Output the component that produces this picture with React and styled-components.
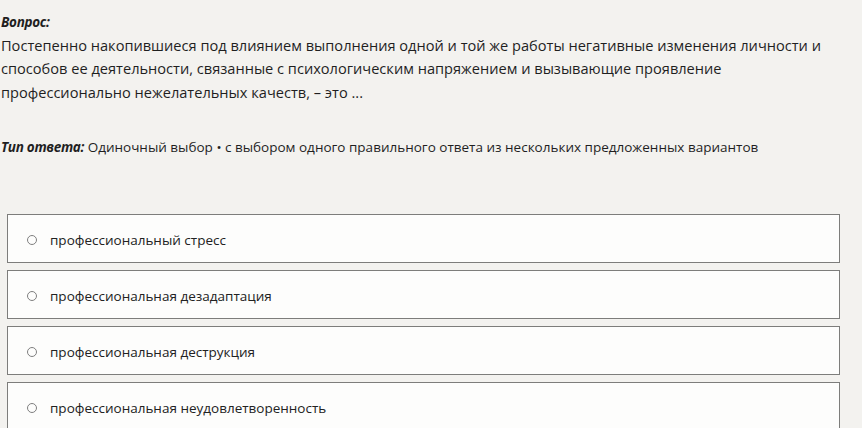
import React from 'react'
import styled, { createGlobalStyle } from 'styled-components'

const Global = createGlobalStyle`
  html, body {
    margin: 0;
    padding: 0;
    background: #f3f2ef;
  }
  body {
    font-family: "Open Sans", "Noto Sans", sans-serif;
    color: #1f1f1f;
  }
`

const Page = styled.div`
  padding: 11px 0 0 1px;
`

const Label = styled.span`
  font-weight: 700;
  font-style: italic;
  letter-spacing: -0.3px;
`

const QuestionTitle = styled.div`
  font-size: 13.5px;
  line-height: 23px;
`

const QuestionText = styled.div`
  font-size: 14.6px;
  line-height: 23.3px;
  white-space: nowrap;
`

const AnswerType = styled.div`
  margin-top: 33px;
  font-size: 13.5px;
  line-height: 20px;
  white-space: nowrap;
`

const Options = styled.div`
  margin: 57px 0 0 6px;
  width: 833px;
  display: flex;
  flex-direction: column;
  gap: 7px;
`

const Option = styled.label`
  display: flex;
  align-items: center;
  height: 43px;
  padding-top: 4px;
  box-sizing: content-box;
  background: #fdfdfc;
  border: 1px solid #7d7d7b;
  font-size: 13.5px;
  color: #222;
  cursor: pointer;
`

const Radio = styled.span`
  width: 8px;
  height: 8px;
  border: 1px solid #7f7f7f;
  border-radius: 50%;
  margin: 0 13px 0 19px;
  flex-shrink: 0;
`

const options = [
  'профессиональный стресс',
  'профессиональная дезадаптация',
  'профессиональная деструкция',
  'профессиональная неудовлетворенность',
]

export default function App() {
  return (
    <>
      <Global />
      <Page>
        <QuestionTitle>
          <Label>Вопрос:</Label>
        </QuestionTitle>
        <QuestionText>
          Постепенно накопившиеся под влиянием выполнения одной и той же работы негативные изменения личности и
          <br />
          способов ее деятельности, связанные с психологическим напряжением и вызывающие проявление
          <br />
          профессионально нежелательных качеств, – это ...
        </QuestionText>
        <AnswerType>
          <Label>Тип ответа:</Label> Одиночный выбор • с выбором одного правильного ответа из нескольких предложенных вариантов
        </AnswerType>
        <Options>
          {options.map((o) => (
            <Option key={o}>
              <Radio />
              {o}
            </Option>
          ))}
        </Options>
      </Page>
    </>
  )
}
